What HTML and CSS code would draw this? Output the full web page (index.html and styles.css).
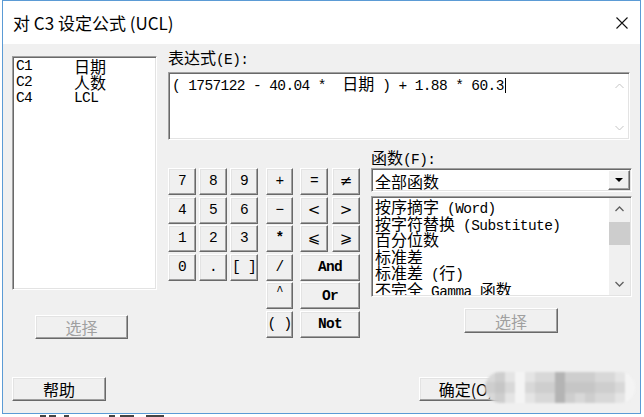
FILE: index.html
```html
<!DOCTYPE html>
<html lang="zh-CN">
<head>
    <meta charset="UTF-8">
    <title>对 C3 设定公式 (UCL)</title>
    <link rel="stylesheet" href="styles.css">
</head>
<body>
    <div class="window">
        <div class="titlebar">
            <span class="title">对 C3 设定公式 (UCL)</span>
            <svg class="close" width="12" height="12" viewBox="0 0 12 12">
                <path d="M0.5 0.5 L11.5 11.5 M11.5 0.5 L0.5 11.5" stroke="#111" stroke-width="1.1" fill="none"/>
            </svg>
        </div>

        <div class="dialog">
            <div class="main">
                <!-- column list + select -->
                <div class="left">
                    <div class="columns sunken">
                        <div class="col-row"><span class="id">C1</span><span class="cj">日期</span></div>
                        <div class="col-row"><span class="id">C2</span><span class="cj">人数</span></div>
                        <div class="col-row"><span class="id">C4</span><span>LCL</span></div>
                    </div>
                    <button class="btn cjk disabled pick-left">选择</button>
                </div>

                <div class="right">
                    <div class="label"><span class="cj">表达式</span>(E):</div>
                    <div class="expr sunken">
                        <div class="expr-text">( 1757122 - 40.04 *  <span class="cj">日期</span> ) + 1.88 * 60.3<span class="caret"></span></div>
                        <div class="expr-scroll">
                            <div class="arrow"><svg width="9" height="6" viewBox="0 0 9 6"><polyline points="0.5,5 4.5,1 8.5,5" stroke="#c4c4c4" fill="none"/></svg></div>
                            <div class="arrow"><svg width="9" height="6" viewBox="0 0 9 6"><polyline points="0.5,1 4.5,5 8.5,1" stroke="#c4c4c4" fill="none"/></svg></div>
                        </div>
                    </div>

                    <div class="lower">
                        <div class="keypad">
                            <div class="digits">
                                <button class="btn key">7</button>
                                <button class="btn key">8</button>
                                <button class="btn key">9</button>
                                <button class="btn key">4</button>
                                <button class="btn key">5</button>
                                <button class="btn key">6</button>
                                <button class="btn key">1</button>
                                <button class="btn key">2</button>
                                <button class="btn key">3</button>
                                <button class="btn key">0</button>
                                <button class="btn key">.</button>
                                <button class="btn key">[ ]</button>
                            </div>
                            <div class="ops">
                                <button class="btn key">+</button>
                                <button class="btn key">−</button>
                                <button class="btn key bold">*</button>
                                <button class="btn key">/</button>
                                <button class="btn key caret-key">^</button>
                                <button class="btn key">( )</button>
                            </div>
                            <div class="logic">
                                <button class="btn key">=</button>
                                <button class="btn key sym">≠</button>
                                <button class="btn key sym">&lt;</button>
                                <button class="btn key sym">&gt;</button>
                                <button class="btn key sym">⩽</button>
                                <button class="btn key sym">⩾</button>
                                <button class="btn key bold wide">And</button>
                                <button class="btn key bold wide">Or</button>
                                <button class="btn key bold wide">Not</button>
                            </div>
                        </div>

                        <div class="funcs">
                            <div class="label"><span class="cj">函数</span>(F):</div>
                            <div class="combo sunken">
                                <span class="combo-text cj">全部函数</span>
                                <div class="drop">
                                    <svg width="8" height="4" viewBox="0 0 8 4"><polygon points="0,0 8,0 4,4" fill="#000"/></svg>
                                </div>
                            </div>
                            <div class="flist sunken">
                                <div class="items">
                                    <div><span class="cj">按序摘字</span> (Word)</div>
                                    <div><span class="cj">按字符替换</span> (Substitute)</div>
                                    <div><span class="cj">百分位数</span></div>
                                    <div><span class="cj">标准差</span></div>
                                    <div><span class="cj">标准差</span> (<span class="cj">行</span>)</div>
                                    <div><span class="cj">不完全</span> Gamma <span class="cj">函数</span></div>
                                </div>
                                <div class="fscroll">
                                    <div class="arrow"><svg width="9" height="6" viewBox="0 0 9 6"><polyline points="0.5,5 4.5,1 8.5,5" stroke="#606060" stroke-width="1.3" fill="none"/></svg></div>
                                    <div class="thumb"></div>
                                    <div class="arrow down"><svg width="9" height="6" viewBox="0 0 9 6"><polyline points="0.5,1 4.5,5 8.5,1" stroke="#606060" stroke-width="1.3" fill="none"/></svg></div>
                                </div>
                            </div>
                            <button class="btn cjk disabled pick-right">选择</button>
                        </div>
                    </div>
                </div>
            </div>

            <div class="footer">
                <button class="btn cjk">帮助</button>
                <button class="btn cjk ok">确定(O)</button>
                <button class="btn cjk cancel">取消</button>
            </div>

            <!-- pixelated cover over the right-hand buttons -->
            <div class="mosaic">
                <i class="s3"></i><i class="s4"></i><i class="s2"></i><i class="s1"></i><i class="s2"></i><i class="s3"></i><i class="s3"></i><i class="s6"></i><i class="s4"></i><i class="s4"></i><i class="s4"></i><i class="s3"></i><i class="s3"></i><i class="s2"></i><i class="s1"></i>
                <i class="s4"></i><i class="s5"></i><i class="s3"></i><i class="s1"></i><i class="s3"></i><i class="s4"></i><i class="s4"></i><i class="s6"></i><i class="s5"></i><i class="s5"></i><i class="s5"></i><i class="s4"></i><i class="s4"></i><i class="s3"></i><i class="s1"></i>
                <i class="s3"></i><i class="s4"></i><i class="s2"></i><i class="s1"></i><i class="s2"></i><i class="s3"></i><i class="s3"></i><i class="s6"></i><i class="s4"></i><i class="s3"></i><i class="s4"></i><i class="s3"></i><i class="s3"></i><i class="s2"></i><i class="s1"></i>
            </div>
        </div>
    </div>

    <div class="desk">
        <i class="mark" style="width: 6px; margin-left: 40px"></i>
        <i class="mark" style="width: 7px; margin-left: 3px"></i>
        <i class="mark" style="width: 5px; margin-left: 8px"></i>
        <i class="mark" style="width: 6px; margin-left: 40px"></i>
        <i class="mark" style="width: 14px; margin-left: 5px"></i>
        <i class="mark" style="width: 18px; margin-left: 12px"></i>
    </div>
</body>
</html>
```

FILE: styles.css
```css
/* Base */
* {
    box-sizing: border-box;
}

body {
    margin: 0;
    width: 644px;
    height: 417px;
    overflow: hidden;
    background: #fff;
    color: #000;
    font-family: "Liberation Mono", "Noto Sans CJK SC", monospace;
    font-size: 14.5px;
    letter-spacing: -0.6px;
}

.cj {
    font-family: "Noto Sans CJK SC", sans-serif;
    font-size: 16px;
    letter-spacing: 0;
}

/* Window frame */
.window {
    margin-left: 2px;
    width: 639px;
    height: 414px;
    border: 1px solid #5b9bd5;
    display: flex;
    flex-direction: column;
}

.titlebar {
    height: 43px;
    flex: none;
    background: #fff;
    display: flex;
    align-items: center;
    padding: 0 12px 0 10px;
}

.title {
    font-family: "Noto Sans CJK SC", sans-serif;
    font-size: 17px;
    letter-spacing: 0;
}

.close {
    margin-left: auto;
}

.dialog {
    flex: 1;
    position: relative;
    background: #f0f0f0;
    display: flex;
    flex-direction: column;
    padding: 4px 0 12px 9px;
}

/* Shared 3D looks */
.sunken {
    background: #fff;
    border: 1px solid;
    border-color: #a0a0a0 #fff #fff #a0a0a0;
    box-shadow: inset 1px 1px #696969, inset -1px -1px #e3e3e3;
}

.btn {
    margin: 0;
    padding: 0;
    background: #f0f0f0;
    color: #000;
    border: 1px solid;
    border-color: #fff #696969 #696969 #fff;
    box-shadow: inset -1px -1px #a0a0a0, inset 1px 1px #e3e3e3;
    font-family: "Liberation Mono", monospace;
    font-size: 14.5px;
    letter-spacing: -0.7px;
    line-height: 1;
    white-space: pre;
}

.btn.cjk {
    font-family: "Noto Sans CJK SC", sans-serif;
    font-size: 16px;
    letter-spacing: 0;
    width: 94px;
    height: 24px;
}

.btn.disabled {
    color: #a0a0a0;
}

/* Layout */
.main {
    display: flex;
}

.left {
    width: 145px;
    margin-top: 8px;
    display: flex;
    flex-direction: column;
}

.columns {
    height: 234px;
    padding: 1px 0 0 3px;
    line-height: 16px;
}

.col-row {
    display: flex;
    height: 16px;
}

.id {
    width: 58px;
}

.pick-left {
    margin: 25px 0 0 23px;
    width: 93px !important;
}

.right {
    margin-left: 11px;
    width: 464px;
}

.label {
    height: 18px;
    line-height: 18px;
    white-space: pre;
}

/* Expression editor */
.expr {
    margin-top: 6px;
    width: 462px;
    height: 68px;
    display: flex;
}

.expr-text {
    flex: 1;
    padding: 2px 0 0 3px;
    line-height: 16px;
    white-space: pre;
}

.caret {
    display: inline-block;
    width: 1px;
    height: 15px;
    background: #000;
    vertical-align: -3px;
    margin-left: 1px;
}

.expr-scroll {
    width: 17px;
    margin-right: 1px;
    display: flex;
    flex-direction: column;
    justify-content: space-between;
    padding: 2px 0 0;
}

.arrow {
    height: 22px;
    display: flex;
    align-items: center;
    justify-content: center;
}

/* Keypad */
.lower {
    display: flex;
    margin-top: 8px;
}

.keypad {
    margin-top: 20px;
    display: flex;
    align-items: flex-start;
}

.digits,
.ops,
.logic {
    display: grid;
    grid-auto-rows: 27px;
    row-gap: 1.6px;
}

.digits {
    grid-template-columns: repeat(3, 28px);
    column-gap: 3px;
}

.ops {
    margin-left: 8px;
    grid-template-columns: 27px;
}

.logic {
    margin-left: 7px;
    grid-template-columns: 28px 28px;
    column-gap: 4px;
}

.key.bold {
    font-weight: bold;
}

.key.sym {
    font-family: "DejaVu Sans", sans-serif;
    font-size: 15px;
    letter-spacing: 0;
}

.key.caret-key {
    padding-bottom: 8px;
    font-size: 12px;
}

.key.wide {
    grid-column: span 2;
}

/* Function picker */
.funcs {
    margin-left: 11px;
    width: 261px;
    display: flex;
    flex-direction: column;
}

.combo {
    margin-top: 2px;
    height: 24px;
    display: flex;
    align-items: center;
    padding: 0 1px 0 3px;
}

.combo-text {
    line-height: 20px;
    padding-top: 1px;
}

.drop {
    margin-left: auto;
    width: 22px;
    height: 20px;
    display: flex;
    align-items: center;
    justify-content: center;
    background: #f0f0f0;
    border: 1px solid;
    border-color: #fff #696969 #696969 #fff;
    box-shadow: inset -1px -1px #a0a0a0;
}

.flist {
    margin-top: 4px;
    height: 101px;
    display: flex;
    padding: 1px 1px 1px 3px;
}

.items {
    flex: 1;
    overflow: hidden;
    line-height: 16.6px;
}

.items > div {
    height: 16.6px;
    white-space: pre;
}

.fscroll {
    width: 21px;
    background: #f0f0f0;
    display: flex;
    flex-direction: column;
}

.thumb {
    margin: 2px 0 0;
    height: 23px;
    background: #cdcdcd;
}

.fscroll .down {
    margin-top: auto;
}

.pick-right {
    margin: 11px 0 0 93px;
    height: 25px !important;
}

/* Bottom buttons */
.footer {
    margin-top: auto;
    display: flex;
}

.footer .ok {
    margin-left: 313px;
}

.footer .cancel {
    margin-left: 12px;
}

/* Pixelated cover */
.mosaic {
    position: absolute;
    left: 482px;
    top: 328px;
    width: 150px;
    height: 31px;
    display: grid;
    grid-template-columns: repeat(15, 10px);
    grid-auto-rows: 10.33px;
    border-radius: 15px;
    overflow: hidden;
    filter: blur(1.2px);
}

.mosaic i { display: block; }
.mosaic .s1 { background: #f4f4f4; }
.mosaic .s2 { background: #e4e4e4; }
.mosaic .s3 { background: #d8d8d8; }
.mosaic .s4 { background: #cecece; }
.mosaic .s5 { background: #c6c6c6; }
.mosaic .s6 { background: #b4b4b4; }

/* Strip of the window behind */
.desk {
    height: 3px;
    display: flex;
    align-items: flex-end;
}

.mark {
    display: block;
    height: 2px;
    background: #444;
}
```
